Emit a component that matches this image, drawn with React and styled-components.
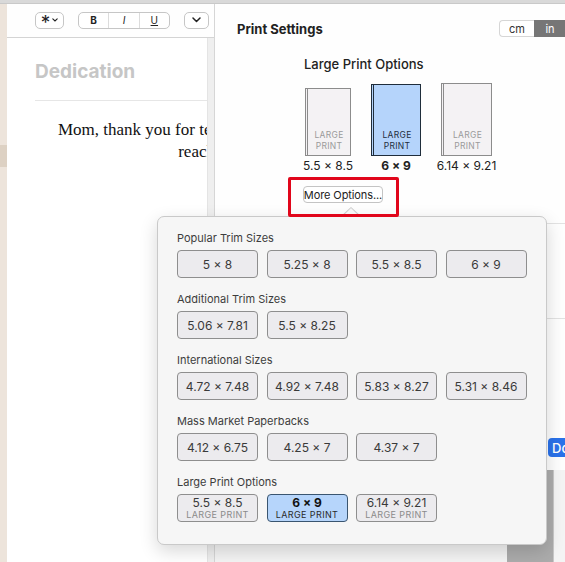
import React, { useState } from "react";
import styled, { createGlobalStyle } from "styled-components";

const GlobalStyle = createGlobalStyle`
  html, body {
    margin: 0;
    padding: 0;
    background: #ffffff;
    overflow: hidden;
  }
  body {
    font-family: Inter, "Noto Sans", "Liberation Sans", sans-serif;
    color: #222;
  }
`;

const Window = styled.div`
  position: relative;
  width: 565px;
  height: 562px;
  overflow: hidden;
  display: flex;
  flex-direction: column;
`;

const TopBar = styled.div`
  height: 3px;
  background: #d9d9d9;
  border-bottom: 1px solid #c9c9c9;
  flex-shrink: 0;
`;

const Main = styled.div`
  flex: 1;
  display: flex;
  min-height: 0;
`;

const Sidebar = styled.div`
  width: 7px;
  flex-shrink: 0;
  background: #ede4db;
  padding-top: 141px;
  box-sizing: border-box;
`;

const SidebarMark = styled.div`
  height: 22px;
  background: #ddd1c3;
`;

const Editor = styled.div`
  width: 207px;
  flex-shrink: 0;
  display: flex;
  flex-direction: column;
  border-right: 1px solid #d6d6d6;
  overflow: hidden;
`;

const Toolbar = styled.div`
  height: 34px;
  flex-shrink: 0;
  box-sizing: border-box;
  border-bottom: 1px solid #d4d4d4;
  display: flex;
  align-items: center;
  padding: 0 0 1px 28px;
  gap: 14px;
  background: #fefefe;
`;

const ToolButton = styled.div`
  height: 17px;
  width: ${(p) => p.$w}px;
  box-sizing: border-box;
  border: 1px solid #c6c6c6;
  border-radius: 5px;
  background: #fff;
  display: flex;
  align-items: center;
  justify-content: center;
  gap: 2px;
  font-size: 11px;
  color: #222;
`;

const Asterisk = styled.span`
  font-size: 19px;
  line-height: 14px;
  margin-top: 5px;
`;

const ToolGroup = styled.div`
  display: flex;
  height: 17px;
  width: 92px;
  box-sizing: border-box;
  border: 1px solid #c6c6c6;
  border-radius: 5px;
  background: #fff;
  overflow: hidden;
`;

const Segment = styled.div`
  flex: 1;
  display: flex;
  align-items: center;
  justify-content: center;
  font-size: 10px;
  font-weight: ${(p) => (p.$bold ? 700 : 400)};
  font-style: ${(p) => (p.$italic ? "italic" : "normal")};
  text-decoration: ${(p) => (p.$underline ? "underline" : "none")};
  color: #222;
  & + & {
    border-left: 1px solid #dcdcdc;
  }
`;

const PageArea = styled.div`
  flex: 1;
  display: flex;
  min-height: 0;
`;

const Page = styled.div`
  flex: 1;
  overflow: hidden;
  padding: 22px 0 0 28px;
`;

const Scroller = styled.div`
  width: 6px;
  flex-shrink: 0;
  background: #efefef;
  border-left: 1px solid #e4e4e4;
`;

const ChapterTitle = styled.div`
  font-size: 19px;
  font-weight: 700;
  color: #c6c6c6;
  line-height: 24px;
  padding-bottom: 16px;
  border-bottom: 1px solid #e6e6e6;
`;

const Dedication = styled.div`
  width: max-content;
  margin: 18px 0 0 23px;
  font-family: "Liberation Serif", "DejaVu Serif", serif;
  font-size: 17px;
  line-height: 22px;
  text-align: center;
  color: #111;
  white-space: nowrap;
`;

const Panel = styled.div`
  flex: 1;
  background: #fefefe;
  display: flex;
  flex-direction: column;
  min-width: 0;
`;

const PanelHeader = styled.div`
  display: flex;
  justify-content: space-between;
  align-items: center;
  padding: 16px 0 0 22px;
`;

const PanelTitle = styled.div`
  font-size: 13px;
  font-weight: 700;
  color: #222;
`;

const UnitSwitch = styled.div`
  display: flex;
  height: 17px;
`;

const Unit = styled.div`
  width: ${(p) => p.$w}px;
  box-sizing: border-box;
  display: flex;
  align-items: center;
  justify-content: center;
  font-size: 11px;
  color: ${(p) => (p.$active ? "#fff" : "#333")};
  background: ${(p) => (p.$active ? "#767676" : "#fff")};
  border: 1px solid ${(p) => (p.$active ? "#767676" : "#d6d6d6")};
  border-right: none;
  border-radius: ${(p) => (p.$active ? "0" : "4px 0 0 4px")};
`;

const LargePrint = styled.div`
  padding: 19px 0 0 89px;
`;

const GroupTitle = styled.div`
  font-size: 13px;
  font-weight: 500;
  color: #222;
  line-height: 16px;
`;

const ThumbRow = styled.div`
  display: flex;
  gap: 20px;
  margin-top: 11px;
  align-items: flex-end;
`;

const ThumbCol = styled.div`
  display: flex;
  flex-direction: column;
  align-items: center;
  width: ${(p) => p.$w}px;
  margin-left: ${(p) => p.$ml || 0}px;
`;

const Thumb = styled.div`
  width: ${(p) => p.$w}px;
  height: ${(p) => p.$h}px;
  box-sizing: border-box;
  background: ${(p) => (p.$active ? "#b5d4fb" : "#f4f2f4")};
  border: 1px solid ${(p) => (p.$active ? "#1f2d3b" : "#8c8c8c")};
  border-left: 3px double ${(p) => (p.$active ? "#1f2d3b" : "#8c8c8c")};
  display: flex;
  flex-direction: column;
  justify-content: flex-end;
  align-items: center;
  padding-bottom: 3px;
  color: ${(p) => (p.$active ? "#1f2d3b" : "#9a9a9a")};
`;

const ThumbLine = styled.div`
  font-size: 8.5px;
  line-height: 11px;
  height: 11px;
  letter-spacing: 0.3px;
`;

const ThumbCaption = styled.div`
  margin-top: 3px;
  font-size: 12px;
  line-height: 14px;
  white-space: nowrap;
  font-weight: ${(p) => (p.$active ? 700 : 400)};
  color: #222;
`;

const CalloutRow = styled.div`
  padding: 4px 0 0 73px;
  display: flex;
`;

const Callout = styled.div`
  position: relative;
  z-index: 5;
  border: 3px solid #e1061b;
  border-radius: 2px;
  padding: 6px 13px 11px 12px;
`;

const MoreButton = styled.button`
  width: 80px;
  height: 17px;
  box-sizing: border-box;
  padding: 0;
  border: 1px solid #c4c4c4;
  border-radius: 4px;
  background: #fff;
  font-family: inherit;
  font-size: 11px;
  letter-spacing: -0.1px;
  white-space: nowrap;
  color: #222;
  display: flex;
  align-items: center;
  justify-content: center;
`;

const PanelSection = styled.div`
  height: ${(p) => p.$h}px;
  flex-shrink: 0;
  margin-top: ${(p) => p.$mt || 0}px;
  border-top: 1px solid #e2e2e2;
  box-sizing: border-box;
  display: flex;
  align-items: flex-start;
  padding-top: ${(p) => p.$pt || 0}px;
  padding-left: ${(p) => p.$pl || 0}px;
`;

const DoneButton = styled.div`
  height: 19px;
  width: 60px;
  flex-shrink: 0;
  background: #2a72ea;
  border-radius: 4px 0 0 4px;
  color: #fff;
  font-size: 13px;
  font-weight: 500;
  padding-left: 4px;
  display: flex;
  align-items: center;
`;

const PreviewArea = styled.div`
  flex: 1;
  display: flex;
  padding-left: 292px;
  background: #f4f4f4;
`;

const PreviewShade = styled.div`
  width: 46px;
  background: #acacac;
  border-right: 1px solid #c8c8c8;
`;

const Popover = styled.div`
  position: absolute;
  left: 157px;
  top: 216px;
  width: 390px;
  height: 329px;
  box-sizing: border-box;
  background: #f6f6f6;
  border: 1px solid #c9c9c9;
  border-radius: 7px;
  box-shadow: 0 6px 18px rgba(0, 0, 0, 0.16);
  padding: 14px 20px 0 19px;
  z-index: 3;
`;

const PopArrow = styled.div`
  position: absolute;
  left: 182px;
  top: -10px;
  width: 0;
  height: 0;
  border-left: 11px solid transparent;
  border-right: 11px solid transparent;
  border-bottom: 10px solid #c9c9c9;
  &::after {
    content: "";
    position: absolute;
    left: -10px;
    top: 1px;
    border-left: 10px solid transparent;
    border-right: 10px solid transparent;
    border-bottom: 10px solid #f6f6f6;
  }
`;

const SizeGroup = styled.div`
  & + & {
    margin-top: 14px;
  }
`;

const SizeLabel = styled.div`
  font-size: 11px;
  line-height: 14px;
  color: #3d3d3d;
  margin-bottom: 5px;
`;

const SizeGrid = styled.div`
  display: grid;
  grid-template-columns: repeat(4, 81px);
  column-gap: 8.5px;
`;

const SizeButton = styled.button`
  height: 28px;
  padding: 0;
  box-sizing: border-box;
  border: 1px solid ${(p) => (p.$active ? "#3a5570" : "#8e8e8e")};
  border-radius: 4px;
  background: ${(p) => (p.$active ? "#b6d5fb" : "#ecebee")};
  font-family: inherit;
  color: ${(p) => (p.$active ? "#111" : "#3a3a3a")};
  display: flex;
  flex-direction: column;
  align-items: center;
  justify-content: center;
  font-size: 12px;
  line-height: 13px;
`;

const SizeMain = styled.span`
  font-weight: ${(p) => (p.$active ? 700 : 400)};
`;

const SizeSub = styled.span`
  font-size: 9px;
  line-height: 11px;
  letter-spacing: 0.4px;
  color: ${(p) => (p.$active ? "#2a2a2a" : "#8a8a8a")};
`;

const Chevron = () => (
  <svg width="9" height="6" viewBox="0 0 9 6">
    <path d="M1 1l3.5 3.5L8 1" fill="none" stroke="#222" strokeWidth="1.5" strokeLinecap="round" strokeLinejoin="round" />
  </svg>
);

const SmallChevron = () => (
  <svg width="6" height="4" viewBox="0 0 6 4">
    <path d="M0.8 0.8L3 3l2.2-2.2" fill="none" stroke="#222" strokeWidth="1.1" strokeLinecap="round" />
  </svg>
);

const groups = [
  { title: "Popular Trim Sizes", sizes: ["5 × 8", "5.25 × 8", "5.5 × 8.5", "6 × 9"] },
  { title: "Additional Trim Sizes", sizes: ["5.06 × 7.81", "5.5 × 8.25"] },
  { title: "International Sizes", sizes: ["4.72 × 7.48", "4.92 × 7.48", "5.83 × 8.27", "5.31 × 8.46"] },
  { title: "Mass Market Paperbacks", sizes: ["4.12 × 6.75", "4.25 × 7", "4.37 × 7"] },
];

const largePrint = [
  { size: "5.5 × 8.5", w: 46, h: 68 },
  { size: "6 × 9", w: 50, h: 72 },
  { size: "6.14 × 9.21", w: 51, h: 73 },
];

export default function App() {
  const [selected, setSelected] = useState("6 × 9");

  return (
    <Window>
      <GlobalStyle />
      <TopBar />
      <Main>
        <Sidebar>
          <SidebarMark />
        </Sidebar>
        <Editor>
          <Toolbar>
            <ToolButton $w={29}>
              <Asterisk>*</Asterisk>
              <SmallChevron />
            </ToolButton>
            <ToolGroup>
              <Segment $bold>B</Segment>
              <Segment $italic>I</Segment>
              <Segment $underline>U</Segment>
            </ToolGroup>
            <ToolButton $w={25}>
              <Chevron />
            </ToolButton>
          </Toolbar>
          <PageArea>
            <Page>
              <ChapterTitle>Dedication</ChapterTitle>
              <Dedication>
                Mom, thank you for teaching me to love books and to
                <br />
                reach for the stars.
              </Dedication>
            </Page>
            <Scroller />
          </PageArea>
        </Editor>
        <Panel>
          <PanelHeader>
            <PanelTitle>Print Settings</PanelTitle>
            <UnitSwitch>
              <Unit $w={35}>cm</Unit>
              <Unit $w={31} $active>
                in
              </Unit>
            </UnitSwitch>
          </PanelHeader>
          <LargePrint>
            <GroupTitle>Large Print Options</GroupTitle>
            <ThumbRow>
              {largePrint.map((t, i) => (
                <ThumbCol key={t.size} $w={t.w} $ml={i === 0 ? 1 : 0}>
                  <Thumb $w={t.w} $h={t.h} $active={t.size === selected}>
                    <ThumbLine>LARGE</ThumbLine>
                    <ThumbLine>PRINT</ThumbLine>
                  </Thumb>
                  <ThumbCaption $active={t.size === selected}>{t.size}</ThumbCaption>
                </ThumbCol>
              ))}
            </ThumbRow>
          </LargePrint>
          <CalloutRow>
            <Callout>
              <MoreButton type="button">More Options...</MoreButton>
            </Callout>
          </CalloutRow>
          <PanelSection $h={95} $mt={6} />
          <PanelSection $h={152} $pt={119} $pl={333}>
            <DoneButton>Done</DoneButton>
          </PanelSection>
          <PreviewArea>
            <PreviewShade />
          </PreviewArea>
        </Panel>
      </Main>

      <Popover>
        <PopArrow />
        {groups.map((g) => (
          <SizeGroup key={g.title}>
            <SizeLabel>{g.title}</SizeLabel>
            <SizeGrid>
              {g.sizes.map((s) => (
                <SizeButton key={s} type="button">
                  {s}
                </SizeButton>
              ))}
            </SizeGrid>
          </SizeGroup>
        ))}
        <SizeGroup>
          <SizeLabel>Large Print Options</SizeLabel>
          <SizeGrid>
            {largePrint.map((t) => (
              <SizeButton
                key={t.size}
                type="button"
                $active={t.size === selected}
                onClick={() => setSelected(t.size)}
              >
                <SizeMain $active={t.size === selected}>{t.size}</SizeMain>
                <SizeSub $active={t.size === selected}>LARGE PRINT</SizeSub>
              </SizeButton>
            ))}
          </SizeGrid>
        </SizeGroup>
      </Popover>
    </Window>
  );
}
